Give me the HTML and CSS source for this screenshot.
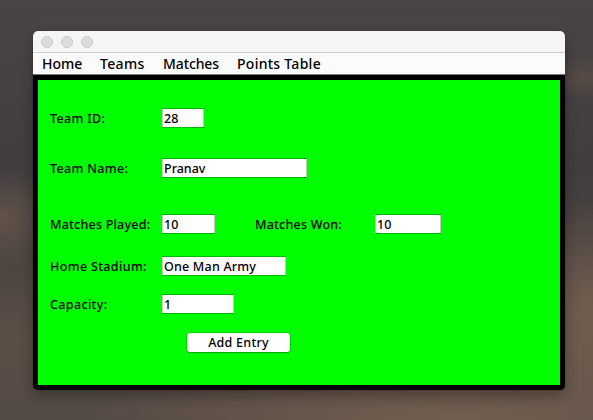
FILE: index.html
```html
<!DOCTYPE html>
<html lang="en">
<head>
<meta charset="utf-8">
<title>Teams</title>
<link rel="stylesheet" href="styles.css">
</head>
<body>
<main class="window">
  <header class="titlebar"><i class="dot"></i><i class="dot"></i><i class="dot"></i></header>
  <nav class="menu">
    <span class="item home">Home</span>
    <span class="item teams">Teams</span>
    <span class="item matches">Matches</span>
    <span class="item points">Points Table</span>
  </nav>
  <form class="form">
    <div class="row id"><label>Team ID:</label><div class="field w-id">28</div></div>
    <div class="row name"><label>Team Name:</label><div class="field w-name">Pranav</div></div>
    <div class="row played"><label>Matches Played:</label><div class="field w-played">10</div><label class="won">Matches Won:</label><div class="field w-won">10</div></div>
    <div class="row stadium"><label>Home Stadium:</label><div class="field w-stadium">One Man Army</div></div>
    <div class="row capacity"><label>Capacity:</label><div class="field w-capacity">1</div></div>
    <button class="add" type="button">Add Entry</button>
  </form>
</main>
</body>
</html>
```
FILE: styles.css
```css
* { box-sizing: border-box; }
body {
  margin: 0;
  height: 420px;
  padding: 31px 28px 0 33px;
  overflow: hidden;
  font-family: "Noto Sans", "Open Sans", sans-serif;
  font-weight: 500;
  color: #000;
  background:
    radial-gradient(ellipse 50px 22px at 585px 78px, rgba(105, 84, 72, .5), transparent),
    radial-gradient(ellipse 70px 50px at 0 218px, rgba(115, 94, 80, .6), transparent),
    radial-gradient(ellipse 120px 110px at 593px 310px, rgba(128, 104, 84, .65), transparent),
    radial-gradient(ellipse 380px 110px at 460px 430px, rgba(122, 100, 82, .85), transparent),
    linear-gradient(#4a4545 0, #413d3f 40%, #4b4340 60%, #5b4e46 80%, #544a45 100%);
}
.window {
  width: 532px;
  height: 359px;
  display: flex;
  flex-direction: column;
  border-radius: 5px;
  overflow: hidden;
  background: #000;
  box-shadow: 0 6px 14px rgba(0, 0, 0, .3), 0 0 1px rgba(0, 0, 0, .6);
}
.titlebar {
  flex: none;
  height: 22px;
  padding: 5px 0 0 8px;
  display: flex;
  gap: 8px;
  background: #f5f5f5;
  border-bottom: 1px solid #cecece;
}
.dot {
  width: 12px;
  height: 12px;
  border: 1px solid #cbcbcb;
  border-radius: 50%;
  background: #dcdcdc;
}
.menu {
  flex: none;
  height: 22px;
  padding-left: 9px;
  display: flex;
  background: #fbfbfb;
  border-bottom: 1px solid #777;
  font-size: 14px;
  line-height: 22px;
  white-space: nowrap;
}
.home { width: 58px; }
.teams { width: 63px; letter-spacing: .35px; }
.matches { width: 74px; letter-spacing: -.1px; }
.points { letter-spacing: .27px; }
.form {
  width: 522px;
  height: 305px;
  margin: 5px 5px 0;
  padding: 28px 0 0 12px;
  background: #0f0;
  font-size: 12.5px;
}
.row { display: flex; height: 20px; }
.row label {
  width: 112px;
  line-height: 22px;
  white-space: nowrap;
  letter-spacing: .22px;
}
.row .won { width: 120px; margin-left: 40px; }
.id label, .name label, .stadium label, .capacity label { letter-spacing: .35px; }
.name { margin-top: 30px; }
.played { margin-top: 36px; }
.stadium { margin-top: 22px; }
.capacity { margin-top: 18px; }
.field {
  height: 20px;
  padding-left: 2px;
  line-height: 20px;
  letter-spacing: .2px;
  white-space: nowrap;
  background: #fff;
  border: solid #00b800;
  border-width: 1px 0;
  box-shadow: inset 1px 0 #c4cdc4, inset -1px 0 #c4cdc4;
}
.w-id { width: 42px; }
.w-name { width: 145px; letter-spacing: 0; }
.w-played { width: 53px; }
.w-won { width: 66px; }
.w-stadium { width: 124px; }
.w-capacity { width: 72px; }
.add {
  display: block;
  width: 103px;
  height: 19px;
  margin: 19px 0 0 137px;
  padding: 0;
  border: 0;
  border-radius: 3px;
  background: #fff;
  box-shadow: 0 0 0 .5px #00b000, 0 1px 1px #00a000;
  font: inherit;
  letter-spacing: .25px;
  line-height: 19px;
  color: #000;
}
```
